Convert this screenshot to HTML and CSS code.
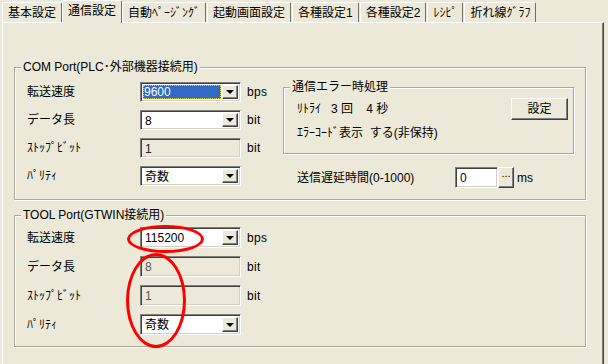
FILE: index.html
```html
<!DOCTYPE html>
<html lang="ja">
<head>
<meta charset="utf-8">
<title>通信設定</title>
<link rel="stylesheet" href="styles.css">
</head>
<body>
<div class="tabs">
  <div class="tab">基本設定</div>
  <div class="tab active">通信設定</div>
  <div class="tab">自動ﾍﾟｰｼﾞﾝｸﾞ</div>
  <div class="tab">起動画面設定</div>
  <div class="tab">各種設定1</div>
  <div class="tab">各種設定2</div>
  <div class="tab">ﾚｼﾋﾟ</div>
  <div class="tab">折れ線ｸﾞﾗﾌ</div>
</div>
<div class="panel">
  <div class="group g-com">
    <div class="legend">COM Port(PLC･外部機器接続用)</div>
    <div class="cols">
      <div class="rows rows-com">
        <div class="row"><span class="lbl">転送速度</span><div class="combo"><span class="val selected">9600</span><span class="drop"><i></i></span></div><span class="unit">bps</span></div>
        <div class="row"><span class="lbl">データ長</span><div class="combo"><span class="val">8</span><span class="drop"><i></i></span></div><span class="unit">bit</span></div>
        <div class="row"><span class="lbl">ｽﾄｯﾌﾟﾋﾞｯﾄ</span><div class="combo disabled"><span class="val">1</span></div><span class="unit">bit</span></div>
        <div class="row"><span class="lbl">ﾊﾟﾘﾃｨ</span><div class="combo"><span class="val">奇数</span><span class="drop"><i></i></span></div></div>
      </div>
      <div class="right">
        <div class="group g-err">
          <div class="legend">通信エラー時処理</div>
          <div class="err-row1"><span>ﾘﾄﾗｲ&nbsp;&nbsp;&nbsp;3 回&nbsp;&nbsp;&nbsp;&nbsp;4 秒</span><button class="btn btn-set">設定</button></div>
          <div class="err-row2">ｴﾗｰｺｰﾄﾞ表示&nbsp;&nbsp;する(非保持)</div>
        </div>
        <div class="delay">
          <span class="delay-lbl">送信遅延時間(0-1000)</span>
          <div class="combo textbox"><span class="val">0</span></div>
          <button class="btn btn-dots">...</button>
          <span class="ms">ms</span>
        </div>
      </div>
    </div>
  </div>
  <div class="group g-tool">
    <div class="legend">TOOL Port(GTWIN接続用)</div>
    <div class="rows rows-tool">
      <div class="row"><span class="lbl">転送速度</span><div class="combo"><span class="val">115200</span><span class="drop"><i></i></span></div><span class="unit">bps</span></div>
      <div class="row"><span class="lbl">データ長</span><div class="combo disabled"><span class="val grey">8</span></div><span class="unit">bit</span></div>
      <div class="row"><span class="lbl">ｽﾄｯﾌﾟﾋﾞｯﾄ</span><div class="combo disabled"><span class="val grey">1</span></div><span class="unit">bit</span></div>
      <div class="row"><span class="lbl">ﾊﾟﾘﾃｨ</span><div class="combo"><span class="val">奇数</span><span class="drop"><i></i></span></div></div>
    </div>
  </div>
</div>
<div class="mark mark-speed"></div>
<div class="mark mark-col"></div>
</body>
</html>
```
FILE: styles.css
```css
html, body {
  margin: 0;
  padding: 0;
}
body {
  position: relative;
  width: 608px;
  height: 364px;
  overflow: hidden;
  background: #ece9d8;
  font-family: "Liberation Sans", "Noto Sans CJK JP", sans-serif;
  font-size: 12px;
  line-height: 14px;
  color: #000;
}
.tabs {
  display: flex;
  align-items: flex-end;
  height: 22px;
  padding-left: 2px;
  position: relative;
  z-index: 2;
}
.tab {
  height: 19px;
  padding: 0 5px;
  border-top: 1px solid #fff;
  border-left: 1px solid #fff;
  border-right: 1px solid #716f64;
  margin-right: 1px;
  line-height: 20px;
  white-space: nowrap;
  border-radius: 2px 2px 0 0;
}
.tab.active {
  height: 22px;
  margin-bottom: -1px;
  margin-left: -1px;
  margin-right: 0;
  background: #ece9d8;
  line-height: 21px;
}
.panel {
  box-sizing: border-box;
  margin: 0 4px 0 2px;
  height: 342px;
  border-top: 1px solid #fff;
  border-left: 1px solid #fff;
  border-right: 1px solid #404040;
  box-shadow: inset -1px 0 0 #808080;
  padding: 44px 0 0 11px;
}
.group {
  position: relative;
  box-sizing: border-box;
  border: 1px solid #aca899;
  box-shadow: inset 1px 1px 0 #fff, 1px 1px 0 #fff;
}
.legend {
  position: absolute;
  top: -8px;
  left: 6px;
  padding: 0 2px;
  background: #ece9d8;
  white-space: nowrap;
}
.g-com {
  width: 572px;
  height: 133px;
  padding: 14px 0 0 12px;
}
.g-tool {
  width: 572px;
  height: 132px;
  margin-top: 15px;
  padding: 11px 0 0 12px;
}
.cols {
  display: flex;
}
.rows {
  width: 256px;
  display: flex;
  flex-direction: column;
}
.rows-com { gap: 8px; }
.rows-tool { gap: 8px; }
.row {
  display: flex;
  align-items: center;
  height: 20px;
}
.rows-tool .row { height: 21px; }
.lbl {
  width: 113px;
  flex: none;
  white-space: nowrap;
}
.combo {
  box-sizing: border-box;
  width: 101px;
  height: 100%;
  flex: none;
  display: flex;
  align-items: stretch;
  padding: 1px;
  background: #fff;
  border: 1px solid;
  border-color: #7f7f7f #fff #fff #7f7f7f;
  box-shadow: inset 1px 1px 0 #404040, inset -1px -1px 0 #d4d0c8;
}
.combo .val {
  flex: 1;
  padding: 0 2px;
  margin: 1px 0 0 1px;
  display: flex;
  align-items: center;
  white-space: nowrap;
}
.combo .val.selected {
  margin: 1px 1px 1px 1px;
  padding: 0 1px;
  background: #316ac5;
  color: #fff;
  outline: 1px dotted #d6d04a;
  outline-offset: -1px;
}
.combo.disabled {
  background: #ece9d8;
}
.combo.disabled .val {
  align-items: flex-start;
  padding-top: 1px;
  color: #222;
}
.combo .val.grey { color: #555; }
.drop {
  width: 16px;
  margin: 1px 1px 1px 0;
  flex: none;
  box-sizing: border-box;
  background: #ece9d8;
  border: 1px solid;
  border-color: #fff #404040 #404040 #fff;
  box-shadow: inset -1px -1px 0 #808080;
  display: flex;
  align-items: center;
  justify-content: center;
}
.drop i {
  display: block;
  width: 0;
  height: 0;
  border-left: 4px solid transparent;
  border-right: 4px solid transparent;
  border-top: 4px solid #000;
  margin-right: 1px;
}
.unit {
  margin-left: 6px;
  letter-spacing: 0.3px;
}
.right {
  display: flex;
  flex-direction: column;
  padding-top: 5px;
}
.g-err {
  width: 291px;
  height: 67px;
  padding: 10px 0 0 13px;
}
.err-row1 {
  display: flex;
  align-items: center;
  justify-content: space-between;
  height: 22px;
  padding-right: 5px;
}
.err-row2 {
  margin-top: 6px;
}
.btn {
  font: inherit;
  color: #000;
  margin: 0;
  padding: 0;
  background: #ece9d8;
  border: 1px solid;
  border-color: #fff #404040 #404040 #fff;
  box-shadow: inset -1px -1px 0 #808080;
  box-sizing: border-box;
}
.btn-set {
  width: 57px;
  height: 22px;
}
.delay {
  display: flex;
  align-items: center;
  height: 21px;
  margin-top: 13px;
  padding-left: 14px;
}
.delay-lbl {
  width: 158px;
  flex: none;
  white-space: nowrap;
}
.textbox {
  width: 43px;
}
.btn-dots {
  width: 16px;
  height: 21px;
  line-height: 22px;
  display: flex;
  align-items: flex-end;
  justify-content: center;
  padding-bottom: 3px;
  font-size: 11px;
}
.ms {
  margin-left: 3px;
}
.mark {
  position: absolute;
  box-sizing: border-box;
  border: 3px solid #ff0000;
  border-radius: 50%;
}
.mark-speed {
  left: 127px;
  top: 225px;
  width: 77px;
  height: 28px;
}
.mark-col {
  left: 126px;
  top: 253px;
  width: 60px;
  height: 95px;
}
```
